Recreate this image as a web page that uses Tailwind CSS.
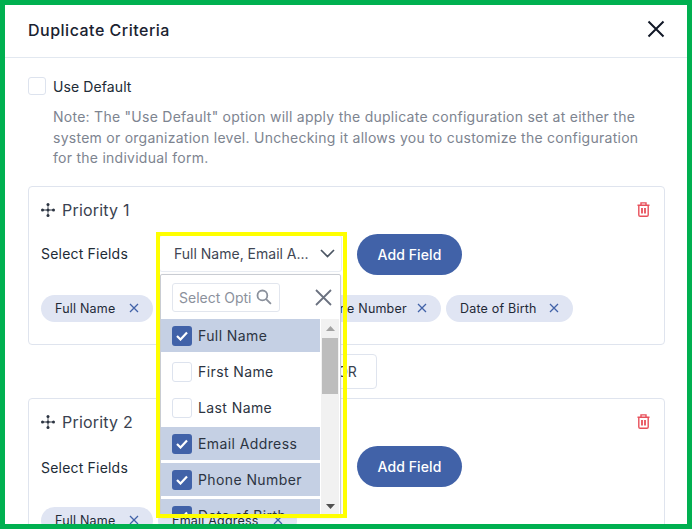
<!DOCTYPE html>
<html lang="en">
<head>
<meta charset="utf-8">
<title>Duplicate Criteria</title>
<script src="https://cdn.jsdelivr.net/npm/@tailwindcss/browser@4"></script>
</head>
<body class="m-0 bg-white">
<div class="relative w-[692px] h-[529px] overflow-hidden border-[5px] border-[#00b050] bg-white font-['Inter',sans-serif] text-[#212b36] text-[14px]">
  <header class="h-[53px] border-b border-[#e2e8f0] flex items-center justify-between pl-[23px] pr-[21px]">
    <h1 class="mb-[2px] text-[16px] font-medium tracking-[0.5px] text-[#1a2230]">Duplicate Criteria</h1>
    <button class="mb-[5px] w-[20px] h-[20px] flex items-center justify-center">
      <svg width="18" height="18" viewBox="0 0 18 18" fill="none" stroke="#111827" stroke-width="2"><path d="M1.5 1.5 16.5 16.5M16.5 1.5 1.5 16.5"/></svg>
    </button>
  </header>
  <main class="pl-[23px] pr-[22px]">
    <label class="flex items-center gap-[7px] mt-[19px] h-[18px]">
      <span class="w-[18px] h-[18px] rounded-[3px] border border-[#dde3ee] bg-white"></span>
      <span class="tracking-[0.1px]">Use Default</span>
    </label>
    <p class="ml-[25px] mt-[11px] pt-[1px] leading-[20.5px] text-[#7d8490] tracking-[0.26px] w-[600px]">Note: The "Use Default" option will apply the duplicate configuration set at either the system or organization level. Unchecking it allows you to customize the configuration for the individual form.</p>

    <section class="mt-[17px] h-[159px] rounded-[4px] border border-[#dfe4ee] px-[12px] pt-[13px]">
      <div class="flex items-center justify-between h-[20px]">
        <div class="flex items-center gap-[7px]">
          <svg width="14" height="14" viewBox="0 0 14 14" fill="#2b3340"><circle cx="7" cy="7" r="1.500"/><circle cx="7" cy="1.500" r="1.500"/><circle cx="7" cy="12.500" r="1.500"/><circle cx="1.500" cy="7" r="1.500"/><circle cx="12.500" cy="7" r="1.500"/><path d="M6.600 2h.8v10h-.8zM2 6.600h10v.8H2z"/></svg>
          <span class="text-[16px] text-[#3a4250] tracking-[0.2px]">Priority 1</span>
        </div>
        <svg class="mr-[2px]" width="13" height="15" viewBox="0 0 13 15" fill="none" stroke="#e8505b" stroke-width="1.400"><path d="M.5 3.200h12M4 3V.9h5V3M1.800 3.200v9.800a1.300 1.300 0 0 0 1.300 1.300h6.800a1.300 1.300 0 0 0 1.300-1.300V3.200"/><path stroke-width="1.800" d="M5 6v5.500M8 6v5.500"/></svg>
      </div>
      <div class="flex items-center mt-[14px] h-[41px]">
        <span class="mb-[1px] w-[118px] shrink-0 tracking-[0.2px]">Select Fields</span>
        <div class="mb-[2px] w-[183px] h-[37px] shrink-0 rounded-[3px] border border-[#e8ecf2] flex items-center justify-between pl-[14px] pr-[6px]">
          <span class="text-[#3f4654] whitespace-nowrap">Full Name, Email A...</span>
          <svg width="15" height="9" viewBox="0 0 15 9" fill="none" stroke="#4b5563" stroke-width="1.700"><path d="M1 1l6.500 6.500L14 1"/></svg>
        </div>
        <button class="ml-[15px] w-[105px] h-[41px] rounded-full bg-[#4162a8] text-white font-medium tracking-[0.1px]">Add Field</button>
      </div>
      <div class="flex gap-[5px] mt-[20px] text-[12.500px] tracking-[0.2px] text-[#1f2937]">
        <span class="h-[27px] w-[112px] rounded-full bg-[#e0e5f3] flex items-center justify-between px-[14px]"><span class="pt-[2px]">Full Name</span><svg width="10" height="10" viewBox="0 0 10 10" stroke="#4162a8" stroke-width="1.300"><path d="M1 1l8 8M9 1l-8 8"/></svg></span>
        <span class="h-[27px] w-[139px] rounded-full bg-[#e0e5f3] flex items-center justify-between px-[14px]"><span class="pt-[2px]">Email Address</span><svg width="10" height="10" viewBox="0 0 10 10" stroke="#4162a8" stroke-width="1.300"><path d="M1 1l8 8M9 1l-8 8"/></svg></span>
        <span class="h-[27px] w-[139px] rounded-full bg-[#e0e5f3] flex items-center justify-between px-[14px]"><span class="pt-[2px]">Phone Number</span><svg width="10" height="10" viewBox="0 0 10 10" stroke="#4162a8" stroke-width="1.300"><path d="M1 1l8 8M9 1l-8 8"/></svg></span>
        <span class="h-[27px] w-[127px] rounded-full bg-[#e0e5f3] flex items-center justify-between px-[14px]"><span class="pt-[2px]">Date of Birth</span><svg width="10" height="10" viewBox="0 0 10 10" stroke="#4162a8" stroke-width="1.300"><path d="M1 1l8 8M9 1l-8 8"/></svg></span>
      </div>
    </section>

    <div class="flex justify-center mt-[9px] pl-[1px]">
      <button class="w-[59px] h-[35px] rounded-[4px] border border-[#dfe4ee] text-[#3a4250]">OR</button>
    </div>

    <section class="mt-[9px] h-[160px] rounded-[4px] border border-[#dfe4ee] px-[12px] pt-[13px]">
      <div class="flex items-center justify-between h-[20px]">
        <div class="flex items-center gap-[7px]">
          <svg width="14" height="14" viewBox="0 0 14 14" fill="#2b3340"><circle cx="7" cy="7" r="1.500"/><circle cx="7" cy="1.500" r="1.500"/><circle cx="7" cy="12.500" r="1.500"/><circle cx="1.500" cy="7" r="1.500"/><circle cx="12.500" cy="7" r="1.500"/><path d="M6.600 2h.8v10h-.8zM2 6.600h10v.8H2z"/></svg>
          <span class="text-[16px] text-[#3a4250] tracking-[0.2px]">Priority 2</span>
        </div>
        <svg class="mr-[2px]" width="13" height="15" viewBox="0 0 13 15" fill="none" stroke="#e8505b" stroke-width="1.400"><path d="M.5 3.200h12M4 3V.9h5V3M1.800 3.200v9.800a1.300 1.300 0 0 0 1.300 1.300h6.800a1.300 1.300 0 0 0 1.300-1.300V3.200"/><path stroke-width="1.800" d="M5 6v5.500M8 6v5.500"/></svg>
      </div>
      <div class="flex items-center mt-[14px] h-[41px]">
        <span class="mt-[2px] w-[118px] shrink-0 tracking-[0.2px]">Select Fields</span>
        <div class="w-[183px] h-[37px] shrink-0"></div>
        <button class="ml-[15px] w-[105px] h-[41px] rounded-full bg-[#4162a8] text-white font-medium tracking-[0.1px]">Add Field</button>
      </div>
      <div class="flex gap-[5px] mt-[20px] text-[12.500px] tracking-[0.2px] text-[#1f2937]">
        <span class="h-[27px] w-[112px] rounded-full bg-[#e0e5f3] flex items-center justify-between px-[14px]"><span class="pt-[2px]">Full Name</span><svg width="10" height="10" viewBox="0 0 10 10" stroke="#4162a8" stroke-width="1.300"><path d="M1 1l8 8M9 1l-8 8"/></svg></span>
        <span class="h-[27px] w-[139px] rounded-full bg-[#e0e5f3] flex items-center justify-between px-[14px]"><span class="pt-[2px]">Email Address</span><svg width="10" height="10" viewBox="0 0 10 10" stroke="#4162a8" stroke-width="1.300"><path d="M1 1l8 8M9 1l-8 8"/></svg></span>
      </div>
    </section>
  </main>

  <!-- open dropdown menu -->
  <div class="absolute left-[155px] top-[269px] w-[181px] h-[243px] rounded-[2px] border border-[#c9ccd2] bg-white shadow-sm overflow-hidden">
    <div class="h-[44px] flex items-center pl-[11px] pr-[8px] justify-between">
      <div class="w-[108px] h-[29px] rounded-[3px] border border-[#e2e6ee] flex items-center pl-[6px] pr-[7px] justify-between">
        <span class="w-[72px] overflow-hidden whitespace-nowrap text-[#8b919c]">Select Option</span>
        <svg width="16" height="16" viewBox="0 0 15 15" fill="none" stroke="#8b919c" stroke-width="1.700"><circle cx="6" cy="6" r="4.600"/><path d="M9.500 9.500 14 14"/></svg>
      </div>
      <svg width="17" height="17" viewBox="0 0 17 17" fill="none" stroke="#6b7280" stroke-width="1.800"><path d="M1 1l15 15M16 1 1 16"/></svg>
    </div>
    <div class="flex">
      <ul class="w-[159px] flex flex-col gap-[3px] text-[#2c3442] tracking-[0.4px]">
        <li class="h-[33px] shrink-0 bg-[#c5d0e4] flex items-center gap-[6px] pl-[11px]"><span class="w-[20px] h-[20px] rounded-[3px] bg-[#4162a8] flex items-center justify-center"><svg width="12" height="10" viewBox="0 0 12 10" fill="none" stroke="white" stroke-width="2.200"><path d="M1 5l3.500 3.500L11 1.500"/></svg></span>Full Name</li>
        <li class="h-[33px] shrink-0 flex items-center gap-[6px] pl-[11px]"><span class="w-[20px] h-[20px] rounded-[3px] border border-[#dde3ee] bg-white"></span>First Name</li>
        <li class="h-[33px] shrink-0 flex items-center gap-[6px] pl-[11px]"><span class="w-[20px] h-[20px] rounded-[3px] border border-[#dde3ee] bg-white"></span>Last Name</li>
        <li class="h-[33px] shrink-0 bg-[#c5d0e4] flex items-center gap-[6px] pl-[11px]"><span class="w-[20px] h-[20px] rounded-[3px] bg-[#4162a8] flex items-center justify-center"><svg width="12" height="10" viewBox="0 0 12 10" fill="none" stroke="white" stroke-width="2.200"><path d="M1 5l3.500 3.500L11 1.500"/></svg></span>Email Address</li>
        <li class="h-[33px] shrink-0 bg-[#c5d0e4] flex items-center gap-[6px] pl-[11px]"><span class="w-[20px] h-[20px] rounded-[3px] bg-[#4162a8] flex items-center justify-center"><svg width="12" height="10" viewBox="0 0 12 10" fill="none" stroke="white" stroke-width="2.200"><path d="M1 5l3.500 3.500L11 1.500"/></svg></span>Phone Number</li>
        <li class="h-[33px] shrink-0 bg-[#c5d0e4] flex items-center gap-[6px] pl-[11px]"><span class="w-[20px] h-[20px] rounded-[3px] bg-[#4162a8] flex items-center justify-center"><svg width="12" height="10" viewBox="0 0 12 10" fill="none" stroke="white" stroke-width="2.200"><path d="M1 5l3.500 3.500L11 1.500"/></svg></span>Date of Birth</li>
      </ul>
      <div class="ml-[1px] w-[18px] h-[196px] bg-[#f1f1f1] flex flex-col items-center relative">
        <svg class="mt-[7px]" width="9" height="5" viewBox="0 0 9 5" fill="#a3a3a3"><path d="M4.500 0 9 5H0Z"/></svg>
        <div class="mt-[7px] w-[16px] h-[56px] bg-[#bdbdbd]"></div>
        <svg class="absolute bottom-[6px]" width="9" height="5" viewBox="0 0 9 5" fill="#505050"><path d="M0 0h9L4.500 5Z"/></svg>
      </div>
    </div>
  </div>

  <!-- yellow annotation -->
  <div class="absolute left-[151px] top-[227px] w-[191px] h-[286px] border-[4px] border-[#ffff00] pointer-events-none"></div>
</div>
</body>
</html>
